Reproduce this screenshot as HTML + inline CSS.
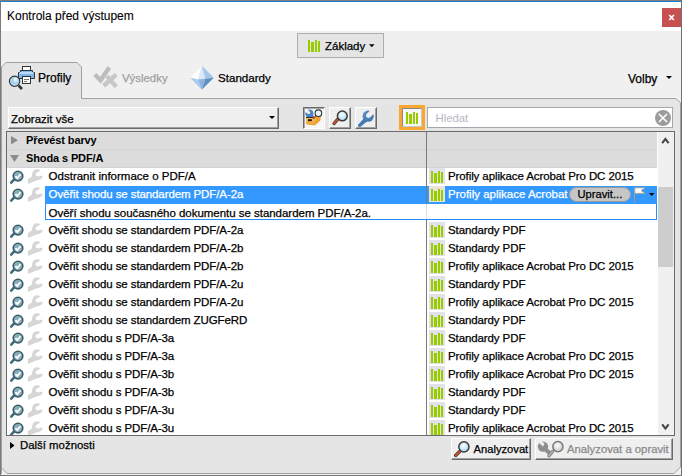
<!DOCTYPE html>
<html><head><meta charset="utf-8">
<style>
*{margin:0;padding:0;box-sizing:border-box}
html,body{width:682px;height:476px;overflow:hidden;background:#f0f0f0}
body{position:relative;font-family:"Liberation Sans",sans-serif;font-size:12px;color:#000}
.a{position:absolute}
.t{position:absolute;white-space:nowrap;line-height:14px;-webkit-text-stroke:0.25px currentColor}
svg{position:absolute;overflow:visible}
.rt{font-size:11.5px}
.hb{font-weight:bold;font-size:11px;-webkit-text-stroke:0;letter-spacing:-0.12px}
</style></head><body>

<svg width="0" height="0" style="position:absolute">
<defs>
  <symbol id="bars" viewBox="0 0 16 16">
    <rect x="2" y="2" width="2" height="12" fill="#99cc00"/>
    <rect x="5" y="4" width="3" height="10" fill="#99cc00"/>
    <rect x="9" y="2" width="2" height="12" fill="#99cc00"/>
    <rect x="12" y="3" width="2" height="11" fill="#99cc00"/>
  </symbol>
  <symbol id="magchk" viewBox="6 0 40 18">
    <line x1="14" y1="11.6" x2="11.2" y2="14.6" stroke="#3d6c7e" stroke-width="2.6" stroke-linecap="round"/>
    <circle cx="18" cy="8.1" r="4.8" fill="#86aebd" stroke="#3e5a66" stroke-width="1.6"/>
    <polyline points="15.4,8.1 17.3,10.1 20.5,6.2" fill="none" stroke="#fff" stroke-width="1.8"/>
    <path d="M37 1.2 C39 1.2 40.4 2.2 40.4 2.2 L35.6 5.4 L35.6 7.3 L37.4 8.6 L42.75 7.5 C42.8 9 42 10.5 40 11.5 L38.8 12.1 L35.6 12.8 L28.6 15.8 L27.9 15.1 L27.9 11.2 L31.9 8.4 L32.3 5.4 C32.5 3 34.5 1.2 37 1.2 Z" fill="#d6d6d6"/>
  </symbol>
  <mask id="wm" maskUnits="userSpaceOnUse" x="0" y="0" width="60" height="20">
    <rect x="0" y="0" width="60" height="20" fill="#fff"/>
    <circle cx="37.3" cy="7.0" r="2.3" fill="#000"/>
    <polygon points="36.3,5.2 38.8,8.6 45,5.5 42,0" fill="#000"/>
  </mask>
</defs>
</svg>

<!-- window frame -->
<div class="a" style="left:0;top:0;width:682px;height:1px;background:#857d77"></div>
<div class="a" style="left:0;top:0;width:1px;height:476px;background:#7b7b7b"></div>
<div class="a" style="left:681px;top:0;width:1px;height:476px;background:#707070"></div>
<div class="a" style="left:0;top:475px;width:682px;height:1px;background:#767676"></div>
<div class="a" style="left:1px;top:1px;width:680px;height:1px;background:#1a7fd6"></div>
<div class="a" style="left:1px;top:2px;width:680px;height:29px;background:#fff"></div>
<div class="t" style="left:7px;top:9px;font-size:12px;-webkit-text-stroke:0.1px">Kontrola před výstupem</div>
<div class="a" style="left:662px;top:8px;width:19px;height:19px;background:#c75050"></div>
<svg style="left:662px;top:8px" width="19" height="19"><path d="M7.3 7 L11.9 12 M11.9 7 L7.3 12" stroke="#fff" stroke-width="1.7"/></svg>

<!-- Zaklady button -->
<div class="a" style="left:297px;top:33px;width:87px;height:25px;background:#e5e5e5;border:1px solid #adadad"></div>
<svg style="left:306px;top:38px" width="16" height="16"><use href="#bars"/></svg>
<div class="t" style="left:325px;top:39px;font-size:11.5px">Základy</div>
<svg style="left:369px;top:44px" width="7" height="5"><polygon points="0,0.3 5.6,0.3 2.8,3.3" fill="#000"/></svg>

<!-- tab panel -->
<svg style="left:0;top:0" width="682" height="476">
  <path d="M1.5 473.5 L1.5 67 L6 62.5 L77 62.5 L81.5 67 L81.5 98.5 L676 98.5 L680.5 103 L680.5 467 L674 473.5 L7 473.5 L1.5 468 Z" fill="#e5e5e5" stroke="#a0a0a0" stroke-width="1"/>
  <path d="M82.5 97.5 L676 97.5" stroke="#f5f5f5" stroke-width="1"/>
  <rect x="2" y="99" width="79" height="1" fill="#e5e5e5"/>
</svg>

<!-- tab 1 icon: printer + magnifier -->
<svg style="left:6px;top:63px" width="32" height="29" viewBox="0 0 32 29">
  <rect x="16.5" y="3.5" width="8" height="5" fill="#fdfdfd" stroke="#333" stroke-width="1"/>
  <path d="M12.5 9.5 L14.5 9.5 L14.5 7.5 L26.5 7.5 L26.5 9.5 L28.5 9.5 L28.5 15.5 L12.5 15.5 Z" fill="#7db6ec" stroke="#333" stroke-width="1"/>
  <rect x="13.5" y="9" width="14" height="2" fill="#b9dbfa"/>
  <rect x="16.5" y="13.5" width="8" height="7" fill="#fdfdfd" stroke="#333" stroke-width="1"/>
  <line x1="18" y1="16.5" x2="23" y2="16.5" stroke="#777" stroke-width="1"/>
  <line x1="18" y1="18.5" x2="21" y2="18.5" stroke="#777" stroke-width="1"/>
  <line x1="12.5" y1="22.5" x2="16" y2="26" stroke="#333" stroke-width="2.6"/>
  <circle cx="8.6" cy="18.3" r="5.2" fill="#a9d3ee" stroke="#333" stroke-width="1.1"/>
  <circle cx="9.6" cy="16.8" r="2" fill="#e6f4fc"/>
</svg>
<div class="t" style="left:38px;top:71px">Profily</div>

<!-- tab 2 icon: check+X gray -->
<svg style="left:90px;top:63px" width="30" height="29" viewBox="0 0 30 29">
  <path d="M4.8 11.5 L10.5 17.2 L19.3 4.4" fill="none" stroke="#bdbdbd" stroke-width="4.4"/>
  <path d="M13.7 22.9 L26.2 11.5 M16.8 13.1 L26.2 23.8" stroke="#c7c7c7" stroke-width="4.4"/>
</svg>
<div class="t" style="left:122px;top:71px;color:#a0a0a0;font-size:11.4px">Výsledky</div>

<!-- tab 3 icon: diamond -->
<svg style="left:187px;top:63px" width="30" height="30" viewBox="0 0 30 30">
  <polygon points="14.8,2.8 3.2,14.8 11,16.4" fill="#fbfdff"/>
  <polygon points="14.8,2.8 11,16.4 18.3,15.8" fill="#dbe9f8"/>
  <polygon points="14.8,2.8 18.3,15.8 26.8,14.8" fill="#a6c7ea"/>
  <polygon points="3.2,14.8 11,16.4 14.8,26.8" fill="#a9caec"/>
  <polygon points="11,16.4 18.3,15.8 14.8,26.8" fill="#87b4e2"/>
  <polygon points="18.3,15.8 26.8,14.8 14.8,26.8" fill="#5f8fc0"/>
</svg>
<div class="t" style="left:218px;top:71px;font-size:11.6px">Standardy</div>

<!-- Volby -->
<div class="t" style="left:628px;top:72px">Volby</div>
<svg style="left:666px;top:76px" width="7" height="4"><polygon points="0,0 6,0 3,3" fill="#000"/></svg>

<!-- dropdown -->
<div class="a" style="left:8px;top:107px;width:271px;height:22px;background:#efefef;border-top:1px solid #fff;border-left:1px solid #fff;border-right:1px solid #6b6b6b;border-bottom:1px solid #6b6b6b;box-shadow:inset -1px -1px #a0a0a0"></div>
<div class="t" style="left:11px;top:112px;font-size:11.5px">Zobrazit vše</div>
<svg style="left:269px;top:116px" width="7" height="4"><polygon points="0,0 6,0 3,3" fill="#000"/></svg>

<!-- toolbar buttons -->
<div class="a" style="left:303px;top:107px;width:22px;height:22px;background:#f7f7f7;border-top:1px solid #6a6a6a;border-left:1px solid #6a6a6a;border-right:1px solid #fff;border-bottom:1px solid #fff;box-shadow:inset 1px 1px #a8a8a8"></div>
<div class="a" style="left:329px;top:107px;width:22px;height:22px;background:#efefef;border-top:1px solid #fff;border-left:1px solid #fff;border-right:1px solid #6a6a6a;border-bottom:1px solid #6a6a6a;box-shadow:inset -1px -1px #a0a0a0"></div>
<div class="a" style="left:355px;top:107px;width:22px;height:22px;background:#efefef;border-top:1px solid #fff;border-left:1px solid #fff;border-right:1px solid #6a6a6a;border-bottom:1px solid #6a6a6a;box-shadow:inset -1px -1px #a0a0a0"></div>
<!-- toolbox -->
<svg style="left:303px;top:107px" width="22" height="21" viewBox="0 0 22 21">
  <defs>
    <mask id="tbm" maskUnits="userSpaceOnUse" x="0" y="0" width="22" height="21">
      <rect x="0" y="0" width="22" height="21" fill="#fff"/>
      <circle cx="5.6" cy="5.6" r="1.5" fill="#000"/>
      <polygon points="3.6,5.9 5.9,3.6 3,0.5 0.5,3" fill="#000"/>
    </mask>
    <linearGradient id="tbg" x1="0" y1="0" x2="0" y2="1"><stop offset="0" stop-color="#f8c462"/><stop offset="1" stop-color="#eb9c2e"/></linearGradient>
  </defs>
  <g mask="url(#tbm)">
    <circle cx="6.4" cy="6.4" r="4" fill="#4a84c4"/>
    <line x1="7" y1="7" x2="10.5" y2="10.5" stroke="#4a84c4" stroke-width="3"/>
  </g>
  <polygon points="12.3,10.3 17.8,9.2 17.4,13.4 11.8,18.6" fill="#eaa232"/>
  <polygon points="3,10.3 12.3,10.3 11.8,18.6 3,17.2" fill="url(#tbg)"/>
  <rect x="3" y="10" width="8" height="1" fill="#2a2a2a"/>
  <rect x="5" y="12.2" width="3.8" height="1.9" fill="#111"/>
  <line x1="12.8" y1="9" x2="10.2" y2="11.8" stroke="#d9502a" stroke-width="1.8"/>
  <circle cx="15.4" cy="6.2" r="3.3" fill="#eaf6fc" stroke="#2e2e2e" stroke-width="1.1"/>
</svg>
<!-- magnifier -->
<svg style="left:329px;top:107px" width="22" height="21" viewBox="0 0 22 21">
  <defs><radialGradient id="lg0" cx="0.45" cy="0.4" r="0.6"><stop offset="0" stop-color="#ffffff"/><stop offset="1" stop-color="#a6d6f0"/></radialGradient></defs>
  <line x1="8.6" y1="12.4" x2="5" y2="16.6" stroke="#3a3a3a" stroke-width="3.2" stroke-linecap="round"/>
  <line x1="8.6" y1="12.4" x2="5" y2="16.6" stroke="#d4502a" stroke-width="1.9" stroke-linecap="round"/>
  <circle cx="13.3" cy="8.9" r="4.9" fill="url(#lg0)" stroke="#3a3a3a" stroke-width="1.5"/>
</svg>
<!-- wrench blue -->
<svg style="left:355px;top:107px" width="22" height="21" viewBox="0 0 22 21">
  <defs>
    <mask id="wbm" maskUnits="userSpaceOnUse" x="0" y="0" width="22" height="21">
      <rect x="0" y="0" width="22" height="21" fill="#fff"/>
      <circle cx="13.4" cy="8.6" r="2.4" fill="#000"/>
      <polygon points="11.7,6.9 15.1,10.3 21,4.4 17.6,1" fill="#000"/>
    </mask>
    <linearGradient id="wbg" x1="0" y1="0" x2="1" y2="1"><stop offset="0" stop-color="#5a90c8"/><stop offset="1" stop-color="#3f76b0"/></linearGradient>
  </defs>
  <g mask="url(#wbm)">
    <circle cx="13.2" cy="9.2" r="5.6" fill="url(#wbg)"/>
    <polygon points="9.2,11 12.6,14 5.8,19.4 3.4,17.4" fill="#4479b2"/>
    <circle cx="4.6" cy="18.4" r="1.6" fill="#4479b2"/>
  </g>
</svg>

<!-- orange highlighted button -->
<div class="a" style="left:399px;top:105px;width:26px;height:25px;background:#f8a830"></div>
<div class="a" style="left:402px;top:108px;width:20px;height:19px;background:#f8f8f8;border-top:1px solid #8a8a8a;border-left:1px solid #8a8a8a;border-right:1px solid #c8c8c8;border-bottom:1px solid #c8c8c8"></div>
<svg style="left:404px;top:110px" width="16" height="16"><use href="#bars"/></svg>

<!-- search box -->
<div class="a" style="left:427px;top:107px;width:246px;height:21px;background:#fff;border:1px solid #a6a6ae"></div>
<div class="t" style="left:435.5px;top:110.8px;color:#b9b6c0;-webkit-text-stroke:0;font-size:11.3px">Hledat</div>
<svg style="left:655px;top:110px" width="16" height="16" viewBox="0 0 16 16">
  <circle cx="8" cy="8" r="8" fill="#9c9c9c"/>
  <path d="M4 4 L12 12 M12 4 L4 12" stroke="#fff" stroke-width="1.6"/>
</svg>

<!-- list -->
<div class="a" id="list" style="left:6px;top:131px;width:669px;height:305px;background:#fff;border:1px solid #6a6a6a;overflow:hidden">
<!--LIST-->
<div class="a" style="left:0;top:0;width:650px;height:36px;background:#dcdcdc"></div>
<div class="a" style="left:0;top:17px;width:650px;height:2px;background:#d6d6d6"></div>
<div class="a" style="left:0;top:35px;width:650px;height:1px;background:#d3d3d3"></div>
<svg style="left:4px;top:4px" width="8" height="9"><polygon points="0,0 7,4.3 0,8.6" fill="#8c8c8c"/></svg>
<svg style="left:3px;top:23px" width="10" height="8"><polygon points="0,0 9,0 4.5,7" fill="#8c8c8c"/></svg>
<div class="t hb" style="left:19px;top:1px">Převést barvy</div>
<div class="t hb" style="left:19px;top:19px">Shoda s PDF/A</div>
<svg style="left:-1px;top:36px" width="40" height="18"><use href="#magchk"/></svg>
<div class="t rt" style="left:41.6px;top:37px;">Odstranit informace o PDF/A</div>
<div class="a" style="left:422px;top:36px;width:16px;height:16px;background:#e3e1e8"></div>
<svg style="left:422px;top:37px" width="16" height="16"><use href="#bars"/></svg>
<div class="t rt" style="left:441px;top:37px;letter-spacing:-0.1px">Profily aplikace Acrobat Pro DC 2015</div>
<svg style="left:-1px;top:54px" width="40" height="18"><use href="#magchk"/></svg>
<div class="a" style="left:38px;top:54px;width:612px;height:34px;border:1px solid #1f8cff"></div>
<div class="a" style="left:38px;top:54px;width:612px;height:18px;background:#3399ff"></div>
<div class="t rt" style="left:41.6px;top:55px;color:#fff;letter-spacing:-0.1px">Ověřit shodu se standardem PDF/A-2a</div>
<div class="a" style="left:422px;top:54px;width:16px;height:16px;background:#e9e3d8"></div>
<svg style="left:422px;top:55px" width="16" height="16"><use href="#bars"/></svg>
<div class="t rt" style="left:441px;top:55px;color:#fff;letter-spacing:0px">Profily aplikace Acrobat</div>
<div class="a" style="left:562px;top:55px;width:62px;height:15px;background:#c6c6c6;border:1px solid #9a9a9a;border-radius:8px"></div>
<div class="t rt" style="left:570.5px;top:55px;font-size:11.2px">Upravit...</div>
<svg style="left:626px;top:55px" width="14" height="16" viewBox="0 0 14 16"><line x1="1.5" y1="0.5" x2="1.5" y2="15.5" stroke="#a99b8c" stroke-width="1.1"/><polygon points="1.8,0.8 12.2,0.8 8.2,3.6 12.2,6.4 1.8,6.4" fill="#fff" stroke="#a99b8c" stroke-width="0.9"/></svg>
<svg style="left:642px;top:61px" width="6" height="4"><polygon points="0,0 5.5,0 2.75,3" fill="#000"/></svg>
<div class="t rt" style="left:41.6px;top:74px;letter-spacing:-0.03px">Ověří shodu současného dokumentu se standardem PDF/A-2a.</div>
<svg style="left:-1px;top:90px" width="40" height="18"><use href="#magchk"/></svg>
<div class="t rt" style="left:41.6px;top:91px;letter-spacing:-0.1px;">Ověřit shodu se standardem PDF/A-2a</div>
<div class="a" style="left:422px;top:90px;width:16px;height:16px;background:#e3e1e8"></div>
<svg style="left:422px;top:91px" width="16" height="16"><use href="#bars"/></svg>
<div class="t rt" style="left:441px;top:91px;letter-spacing:-0.1px">Standardy PDF</div>
<svg style="left:-1px;top:108px" width="40" height="18"><use href="#magchk"/></svg>
<div class="t rt" style="left:41.6px;top:109px;letter-spacing:-0.1px;">Ověřit shodu se standardem PDF/A-2b</div>
<div class="a" style="left:422px;top:108px;width:16px;height:16px;background:#e3e1e8"></div>
<svg style="left:422px;top:109px" width="16" height="16"><use href="#bars"/></svg>
<div class="t rt" style="left:441px;top:109px;letter-spacing:-0.1px">Standardy PDF</div>
<svg style="left:-1px;top:126px" width="40" height="18"><use href="#magchk"/></svg>
<div class="t rt" style="left:41.6px;top:127px;letter-spacing:-0.1px;">Ověřit shodu se standardem PDF/A-2b</div>
<div class="a" style="left:422px;top:126px;width:16px;height:16px;background:#e3e1e8"></div>
<svg style="left:422px;top:127px" width="16" height="16"><use href="#bars"/></svg>
<div class="t rt" style="left:441px;top:127px;letter-spacing:-0.1px">Profily aplikace Acrobat Pro DC 2015</div>
<svg style="left:-1px;top:144px" width="40" height="18"><use href="#magchk"/></svg>
<div class="t rt" style="left:41.6px;top:145px;letter-spacing:-0.1px;">Ověřit shodu se standardem PDF/A-2u</div>
<div class="a" style="left:422px;top:144px;width:16px;height:16px;background:#e3e1e8"></div>
<svg style="left:422px;top:145px" width="16" height="16"><use href="#bars"/></svg>
<div class="t rt" style="left:441px;top:145px;letter-spacing:-0.1px">Standardy PDF</div>
<svg style="left:-1px;top:162px" width="40" height="18"><use href="#magchk"/></svg>
<div class="t rt" style="left:41.6px;top:163px;letter-spacing:-0.1px;">Ověřit shodu se standardem PDF/A-2u</div>
<div class="a" style="left:422px;top:162px;width:16px;height:16px;background:#e3e1e8"></div>
<svg style="left:422px;top:163px" width="16" height="16"><use href="#bars"/></svg>
<div class="t rt" style="left:441px;top:163px;letter-spacing:-0.1px">Profily aplikace Acrobat Pro DC 2015</div>
<svg style="left:-1px;top:180px" width="40" height="18"><use href="#magchk"/></svg>
<div class="t rt" style="left:41.6px;top:181px;letter-spacing:-0.1px;">Ověřit shodu se standardem ZUGFeRD</div>
<div class="a" style="left:422px;top:180px;width:16px;height:16px;background:#e3e1e8"></div>
<svg style="left:422px;top:181px" width="16" height="16"><use href="#bars"/></svg>
<div class="t rt" style="left:441px;top:181px;letter-spacing:-0.1px">Standardy PDF</div>
<svg style="left:-1px;top:198px" width="40" height="18"><use href="#magchk"/></svg>
<div class="t rt" style="left:41.6px;top:199px;letter-spacing:-0.1px;">Ověřit shodu s PDF/A-3a</div>
<div class="a" style="left:422px;top:198px;width:16px;height:16px;background:#e3e1e8"></div>
<svg style="left:422px;top:199px" width="16" height="16"><use href="#bars"/></svg>
<div class="t rt" style="left:441px;top:199px;letter-spacing:-0.1px">Standardy PDF</div>
<svg style="left:-1px;top:216px" width="40" height="18"><use href="#magchk"/></svg>
<div class="t rt" style="left:41.6px;top:217px;letter-spacing:-0.1px;">Ověřit shodu s PDF/A-3a</div>
<div class="a" style="left:422px;top:216px;width:16px;height:16px;background:#e3e1e8"></div>
<svg style="left:422px;top:217px" width="16" height="16"><use href="#bars"/></svg>
<div class="t rt" style="left:441px;top:217px;letter-spacing:-0.1px">Profily aplikace Acrobat Pro DC 2015</div>
<svg style="left:-1px;top:234px" width="40" height="18"><use href="#magchk"/></svg>
<div class="t rt" style="left:41.6px;top:235px;letter-spacing:-0.1px;">Ověřit shodu s PDF/A-3b</div>
<div class="a" style="left:422px;top:234px;width:16px;height:16px;background:#e3e1e8"></div>
<svg style="left:422px;top:235px" width="16" height="16"><use href="#bars"/></svg>
<div class="t rt" style="left:441px;top:235px;letter-spacing:-0.1px">Profily aplikace Acrobat Pro DC 2015</div>
<svg style="left:-1px;top:252px" width="40" height="18"><use href="#magchk"/></svg>
<div class="t rt" style="left:41.6px;top:253px;letter-spacing:-0.1px;">Ověřit shodu s PDF/A-3b</div>
<div class="a" style="left:422px;top:252px;width:16px;height:16px;background:#e3e1e8"></div>
<svg style="left:422px;top:253px" width="16" height="16"><use href="#bars"/></svg>
<div class="t rt" style="left:441px;top:253px;letter-spacing:-0.1px">Standardy PDF</div>
<svg style="left:-1px;top:270px" width="40" height="18"><use href="#magchk"/></svg>
<div class="t rt" style="left:41.6px;top:271px;letter-spacing:-0.1px;">Ověřit shodu s PDF/A-3u</div>
<div class="a" style="left:422px;top:270px;width:16px;height:16px;background:#e3e1e8"></div>
<svg style="left:422px;top:271px" width="16" height="16"><use href="#bars"/></svg>
<div class="t rt" style="left:441px;top:271px;letter-spacing:-0.1px">Standardy PDF</div>
<svg style="left:-1px;top:288px" width="40" height="18"><use href="#magchk"/></svg>
<div class="t rt" style="left:41.6px;top:289px;letter-spacing:-0.1px;">Ověřit shodu s PDF/A-3u</div>
<div class="a" style="left:422px;top:288px;width:16px;height:16px;background:#e3e1e8"></div>
<svg style="left:422px;top:289px" width="16" height="16"><use href="#bars"/></svg>
<div class="t rt" style="left:441px;top:289px;letter-spacing:-0.1px">Profily aplikace Acrobat Pro DC 2015</div>
<div class="a" style="left:419px;top:0;width:1px;height:303px;background:#7a7a7a"></div>
<div class="a" style="left:419px;top:72px;width:1px;height:15px;background:#dcdcdc"></div>
<div class="a" style="left:651px;top:0;width:16px;height:303px;background:#f0f0f0"></div>
<div class="a" style="left:651px;top:55px;width:15px;height:80px;background:#cdcdcd"></div>
<svg style="left:654px;top:4px" width="9" height="9"><polyline points="1.2,7.2 4.4,2.9 7.6,7.2" fill="none" stroke="#454545" stroke-width="2.1"/></svg>
<svg style="left:654px;top:290px" width="9" height="9"><polyline points="1.2,2.3 4.4,6.6 7.6,2.3" fill="none" stroke="#454545" stroke-width="2.1"/></svg>
<!--/LIST-->
</div>

<!-- Dalsi moznosti -->
<svg style="left:10px;top:442px" width="5" height="8"><polygon points="0,0 4.5,3.5 0,7" fill="#000"/></svg>
<div class="t" style="left:20px;top:438px;font-size:11.4px">Další možnosti</div>

<!-- bottom buttons -->
<div class="a" style="left:451px;top:438px;width:80px;height:22px;background:#efefef;border-top:1px solid #fff;border-left:1px solid #fff;border-right:1px solid #6a6a6a;border-bottom:1px solid #6a6a6a;box-shadow:inset -1px -1px #a0a0a0"></div>
<svg style="left:451px;top:438px" width="22" height="22" viewBox="0 0 22 22">
  <defs><radialGradient id="lg1" cx="0.45" cy="0.4" r="0.6"><stop offset="0" stop-color="#ffffff"/><stop offset="1" stop-color="#a6d6f0"/></radialGradient></defs>
  <line x1="8.4" y1="13.8" x2="4.6" y2="17.4" stroke="#3a3a3a" stroke-width="3.4" stroke-linecap="round"/>
  <line x1="8.4" y1="13.8" x2="4.6" y2="17.4" stroke="#d4502a" stroke-width="2" stroke-linecap="round"/>
  <circle cx="12.9" cy="8.8" r="5.1" fill="url(#lg1)" stroke="#3a3a3a" stroke-width="1.5"/>
</svg>
<div class="t" style="left:473.5px;top:442px;font-size:11.2px">Analyzovat</div>
<div class="a" style="left:535px;top:438px;width:138px;height:22px;background:#efefef;border-top:1px solid #fff;border-left:1px solid #fff;border-right:1px solid #6a6a6a;border-bottom:1px solid #6a6a6a;box-shadow:inset -1px -1px #a0a0a0"></div>
<svg style="left:535px;top:438px" width="30" height="22" viewBox="0 0 30 22">
  <defs><radialGradient id="lg2" cx="0.45" cy="0.4" r="0.6"><stop offset="0" stop-color="#ffffff"/><stop offset="1" stop-color="#c8c8c8"/></radialGradient>
  <mask id="wm2"><rect x="0" y="0" width="30" height="22" fill="#fff"/><polygon points="8,8.5 2,3 5,1 9.5,6" fill="#000"/></mask></defs>
  <g mask="url(#wm2)"><circle cx="8" cy="8.6" r="5.2" fill="#8e8e8e"/><line x1="9" y1="10" x2="14.5" y2="15" stroke="#8e8e8e" stroke-width="4.2" stroke-linecap="round"/></g>
  <line x1="17.5" y1="13.6" x2="14" y2="17.6" stroke="#7a7a7a" stroke-width="3.4" stroke-linecap="round"/>
  <line x1="17.5" y1="13.6" x2="14" y2="17.6" stroke="#b0b0b0" stroke-width="1.8" stroke-linecap="round"/>
  <circle cx="22.9" cy="8.6" r="5.1" fill="url(#lg2)" stroke="#7a7a7a" stroke-width="1.5"/>
</svg>
<div class="t" style="left:567px;top:442px;color:#8a8a8a;font-size:11.3px">Analyzovat a opravit</div>

</body></html>
